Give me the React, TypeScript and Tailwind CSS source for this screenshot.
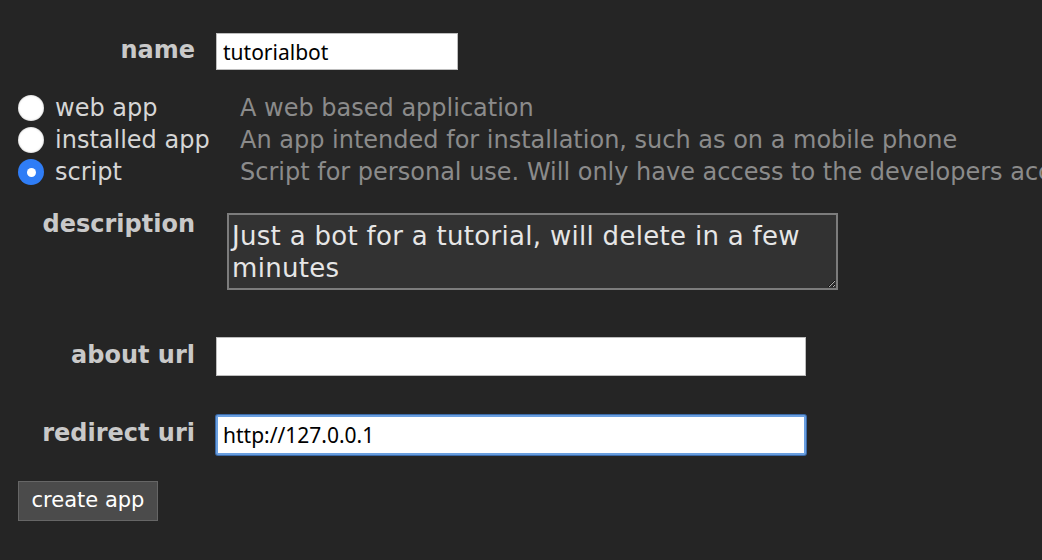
import { useState } from "react";

const labelCls =
  "w-[195px] shrink-0 pb-[4px] text-right text-[24px] leading-[30px] font-bold text-[#c9c9c9] font-['DejaVu_Sans',sans-serif]";

const appTypes = [
  { id: "web", label: "web app", desc: "A web based application" },
  {
    id: "installed",
    label: "installed app",
    desc: "An app intended for installation, such as on a mobile phone",
  },
  {
    id: "script",
    label: "script",
    desc: "Script for personal use. Will only have access to the developers accounts",
  },
];

function Radio({ checked }: { checked: boolean }) {
  if (checked) {
    return (
      <span className="flex h-[26px] w-[26px] shrink-0 items-center justify-center rounded-full bg-[#2f7df6]">
        <span className="h-[9px] w-[9px] rounded-full bg-white" />
      </span>
    );
  }
  return <span className="h-[26px] w-[26px] shrink-0 rounded-full bg-white shadow-[inset_0_0_2px_rgba(0,0,0,0.35)]" />;
}

export default function App() {
  const [kind, setKind] = useState("script");
  const [name, setName] = useState("tutorialbot");
  const [desc, setDesc] = useState("Just a bot for a tutorial, will delete in a few minutes");
  const [about, setAbout] = useState("");
  const [redirect, setRedirect] = useState("http://127.0.0.1");

  return (
    <div className="h-[560px] w-[1042px] overflow-hidden bg-[#252525] pt-[33px] font-['DejaVu_Sans',sans-serif]">
      <div className="flex items-center">
        <div className={labelCls}>name</div>
        <input
          className="ml-[21px] h-[37px] w-[242px] border border-[#bdbdbd] bg-white px-[6px] text-[21px] text-black outline-none font-['Noto_Sans',sans-serif]"
          value={name}
          onChange={(e) => setName(e.target.value)}
        />
      </div>

      <div className="mt-[22px] flex flex-col pl-[18px]">
        {appTypes.map((t) => (
          <label
            key={t.id}
            className="flex h-[32px] cursor-pointer items-center whitespace-nowrap text-[24px]"
            onClick={() => setKind(t.id)}
          >
            <Radio checked={kind === t.id} />
            <span className="ml-[11px] w-[185px] shrink-0 text-[#d6d6d6]">{t.label}</span>
            <span className="shrink-0 text-[#8b8b8b]">{t.desc}</span>
          </label>
        ))}
      </div>

      <div className="mt-[25px] flex items-start">
        <div className={labelCls + " -mt-[4px]"}>description</div>
        <textarea
          className="ml-[32px] h-[77px] w-[611px] resize-y border-2 border-[#7c7c7c] bg-[#323232] py-[5px] pl-[3px] pr-[30px] text-[26px] leading-[32px] tracking-[0.3px] text-[#e6e6e6] outline-none font-['DejaVu_Sans',sans-serif]"
          value={desc}
          onChange={(e) => setDesc(e.target.value)}
        />
      </div>

      <div className="mt-[47px] flex items-center">
        <div className={labelCls}>about url</div>
        <input
          className="ml-[21px] h-[39px] w-[590px] border border-[#bdbdbd] bg-white px-[6px] text-[21px] text-black outline-none font-['Noto_Sans',sans-serif]"
          value={about}
          onChange={(e) => setAbout(e.target.value)}
        />
      </div>

      <div className="mt-[39px] flex items-center">
        <div className={labelCls}>redirect uri</div>
        <input
          className="ml-[21px] h-[40px] w-[590px] rounded-[2px] border-2 border-[#6a9fe0] bg-white px-[5px] text-[21px] text-black shadow-[0_0_0_1px_#3b6aa8] outline-none font-['Noto_Sans',sans-serif]"
          value={redirect}
          onChange={(e) => setRedirect(e.target.value)}
        />
      </div>

      <div className="mt-[26px] pl-[18px]">
        <button
          type="button"
          className="h-[40px] w-[140px] border border-[#666] bg-[#4b4b4b] text-[21px] text-white font-['DejaVu_Sans',sans-serif]"
        >
          create app
        </button>
      </div>
    </div>
  );
}
